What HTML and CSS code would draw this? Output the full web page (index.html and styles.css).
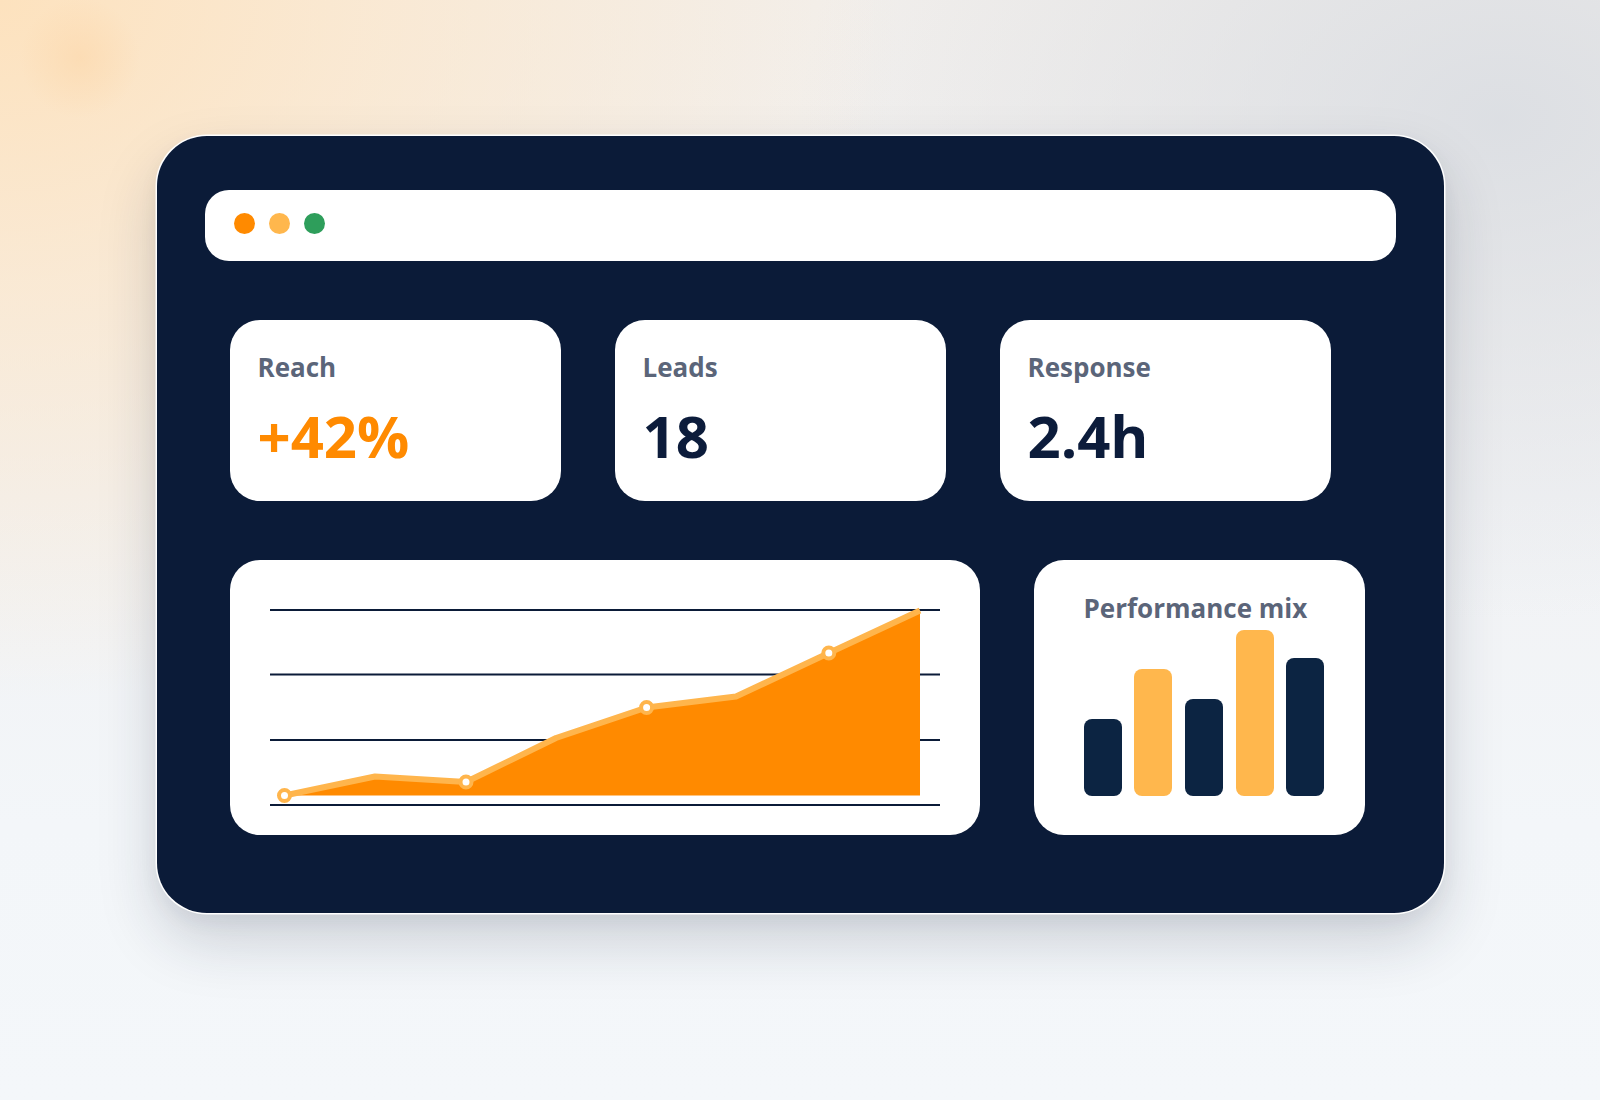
FILE: index.html
```html
<!DOCTYPE html>
<html lang="en">
<head>
<meta charset="utf-8">
<title>Dashboard</title>
<link rel="stylesheet" href="styles.css">
</head>
<body>
<div class="window">
  <div class="titlebar">
    <span class="dot dot-orange"></span>
    <span class="dot dot-amber"></span>
    <span class="dot dot-green"></span>
  </div>
  <div class="content">
    <div class="stats">
      <div class="card stat">
        <div class="label">Reach</div>
        <div class="value value-accent">+42%</div>
      </div>
      <div class="card stat">
        <div class="label">Leads</div>
        <div class="value">18</div>
      </div>
      <div class="card stat">
        <div class="label">Response</div>
        <div class="value">2.4h</div>
      </div>
    </div>
    <div class="panels">
      <div class="card chart">
        <svg class="chart-svg" width="750" height="275" viewBox="0 0 750 275">
          <g class="grid">
            <line x1="40" y1="50" x2="710" y2="50"/>
            <line x1="40" y1="114.5" x2="710" y2="114.5"/>
            <line x1="40" y1="180" x2="710" y2="180"/>
            <line x1="40" y1="245" x2="710" y2="245"/>
          </g>
          <polygon class="area" points="54.5,235.5 145,216.5 236,222 326,178 416.6,147.5 506,136.5 598.8,93 690,50.5 690,235.5"/>
          <polyline class="line" points="54.5,235.5 145,216.5 236,222 326,178 416.6,147.5 506,136.5 598.8,93 690,50.5"/>
          <g class="markers">
            <circle cx="54.5" cy="235.5" r="5.5"/>
            <circle cx="236" cy="222" r="5.5"/>
            <circle cx="416.6" cy="147.5" r="5.5"/>
            <circle cx="598.8" cy="93" r="5.5"/>
          </g>
        </svg>
      </div>
      <div class="card mix">
        <div class="mix-title">Performance mix</div>
        <div class="bars">
          <span class="bar bar-dark" style="height:77px"></span>
          <span class="bar bar-light" style="height:127px"></span>
          <span class="bar bar-dark" style="height:97px"></span>
          <span class="bar bar-light" style="height:166px"></span>
          <span class="bar bar-dark" style="height:138px"></span>
        </div>
      </div>
    </div>
  </div>
</div>
</body>
</html>
```

FILE: styles.css
```css
* { box-sizing: border-box; }

html, body {
  margin: 0;
  padding: 0;
}

body {
  width: 1600px;
  height: 1100px;
  overflow: hidden;
  font-family: "Open Sans", "Noto Sans", "Liberation Sans", sans-serif;
  background:
    radial-gradient(circle at 80px 58px, rgba(252, 214, 168, 0.55) 0, rgba(252, 214, 168, 0) 60px),
    radial-gradient(ellipse 900px 700px at 0 0, rgba(253, 226, 190, 1) 0%, rgba(253, 230, 200, 0.7) 40%, rgba(253, 236, 214, 0) 100%),
    radial-gradient(ellipse 700px 500px at 1500px 120px, rgba(218, 221, 226, 0.9) 0%, rgba(224, 227, 231, 0) 100%),
    linear-gradient(180deg, #f2efec 0%, #f1f2f4 45%, #f3f6f9 75%, #f4f7fa 100%);
  padding-top: 136px;
}

.window {
  width: 1287px;
  margin: 0 auto;
  background: #0b1b38;
  border-radius: 50px;
  padding: 54px 48px 78px;
  box-shadow:
    0 0 0 1.5px #ffffff,
    0 28px 60px rgba(30, 40, 60, 0.18),
    0 8px 20px rgba(30, 40, 60, 0.06);
}

.titlebar {
  height: 71px;
  background: #ffffff;
  border-radius: 24px;
  display: flex;
  align-items: center;
  gap: 14px;
  padding: 0 0 4px 29px;
}

.dot {
  width: 21px;
  height: 21px;
  border-radius: 50%;
  display: block;
}
.dot-orange { background: #ff8a00; }
.dot-amber { background: #ffb74d; }
.dot-green { background: #2e9e5b; }

.content {
  margin-top: 59px;
  padding-left: 25px;
  display: flex;
  flex-direction: column;
  gap: 59px;
}

.stats {
  display: grid;
  grid-template-columns: repeat(3, 331px);
  gap: 54px;
}

.panels {
  display: grid;
  grid-template-columns: 750px 331px;
  gap: 54px;
}

.card {
  background: #ffffff;
  border-radius: 30px;
}

.stat {
  height: 181px;
  padding: 34px 28px 0;
}

.label {
  font-size: 26px;
  line-height: 1;
  font-weight: 700;
  color: #5b6579;
}

.value {
  margin-top: 27px;
  font-size: 58px;
  line-height: 1;
  font-weight: 700;
  color: #0c1c3b;
}

.value-accent {
  color: #ff8a00;
}

.chart {
  height: 275px;
  overflow: hidden;
}

.chart-svg {
  display: block;
}

.grid line {
  stroke: #0b1b38;
  stroke-width: 2;
}

.area {
  fill: #ff8a00;
}

.line {
  fill: none;
  stroke: #ffb54c;
  stroke-width: 6;
  stroke-linejoin: round;
}

.markers circle {
  fill: #ffffff;
  stroke: #ffb54c;
  stroke-width: 4;
}

.mix {
  height: 275px;
  padding: 35px 40px 0 50px;
}

.mix-title {
  font-size: 26px;
  line-height: 1;
  font-weight: 700;
  color: #5b6579;
  white-space: nowrap;
}

.bars {
  height: 175px;
  display: flex;
  align-items: flex-end;
  gap: 12.7px;
}

.bar {
  display: block;
  width: 38px;
  border-radius: 8px;
}
.bar-dark { background: #0c2442; }
.bar-light { background: #ffb74d; }
```
